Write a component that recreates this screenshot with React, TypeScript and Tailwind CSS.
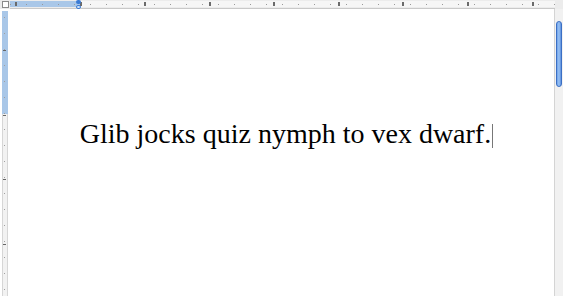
import React from "react";

const TOP_NUMBERS = [15, 80, 144, 209, 273, 338, 402, 467, 532];
const LEFT_NUMBERS = [41, 106, 170, 235];

function TopRuler() {
  const ticks: number[] = [];
  for (let x = 0; x < 545; x += 16) ticks.push(x);
  return (
    <div className="relative h-[9px] flex-1 border-b border-[#c9c9c9] bg-[#ececec]">
      <div className="absolute left-0 top-[1px] h-[6px] w-[70px] bg-[#a9c7e8]" />
      <div className="absolute left-[70px] right-0 top-[1px] h-[6px] bg-[#f6f6f6]" />
      {ticks.map((x) => (
        <span key={x} className="absolute top-[4px] h-px w-px bg-[#9a9a9a]" style={{ left: x }} />
      ))}
      {TOP_NUMBERS.map((x) => (
        <span key={x} className="absolute top-[2px] h-[4px] w-[2px] bg-[#6b6b6b]" style={{ left: x - 10 }} />
      ))}
      <span className="absolute left-[66px] top-0 h-[4px] w-[5px] rounded-sm bg-[#3a7bd5]" />
      <span className="absolute left-[66px] top-[5px] h-[4px] w-[5px] rounded-sm border border-[#3a7bd5] bg-[#cfe1f7]" />
    </div>
  );
}

function LeftRuler() {
  const ticks: number[] = [];
  for (let y = 0; y < 290; y += 16) ticks.push(y);
  return (
    <div className="relative w-[10px] shrink-0 bg-white">
      <div className="absolute bottom-0 left-[2px] top-[2px] w-[6px] border-x border-[#d6d6d6] bg-[#f2f2f2]" />
      <div className="absolute left-[2px] top-[2px] h-[103px] w-[6px] bg-[#a9c7e8]" />
      {ticks.map((y) => (
        <span key={y} className="absolute left-[4px] h-px w-px bg-[#a0a0a0]" style={{ top: y + 8 }} />
      ))}
      {LEFT_NUMBERS.map((y) => (
        <span key={y} className="absolute left-[3px] h-px w-[3px] bg-[#666]" style={{ top: y }} />
      ))}
    </div>
  );
}

function Scrollbar() {
  return (
    <div className="flex w-[9px] shrink-0 flex-col border-l border-[#d4d4d4] bg-[#f1f1f1] px-[1px] pt-[12px]">
      <div className="h-[66px] w-[6px] rounded-[3px] border border-[#3b6fc4] bg-gradient-to-r from-[#6fa2ea] via-[#9cc4f5] to-[#5b8fdc]" />
    </div>
  );
}

export default function App() {
  return (
    <div className="flex h-[296px] w-[563px] flex-col overflow-hidden bg-white">
      <div className="flex h-[9px] shrink-0">
        <div className="flex w-[10px] shrink-0 items-start justify-center bg-[#ececec]">
          <div className="mt-[1px] h-[7px] w-[7px] border border-[#8a8a8a] bg-white" />
        </div>
        <TopRuler />
        <div className="w-[8px] shrink-0 bg-[#ececec]" />
      </div>
      <div className="flex min-h-0 flex-1">
        <LeftRuler />
        <div className="flex flex-1 justify-center pl-[9px] pt-[108px]">
          <p className="font-['Liberation_Serif',serif] text-[28px] leading-[34px] text-black">
            Glib jocks quiz nymph to vex dwarf.
            <span className="ml-px inline-block h-[24px] w-px translate-y-[5px] bg-[#777]" />
          </p>
        </div>
        <Scrollbar />
      </div>
    </div>
  );
}
